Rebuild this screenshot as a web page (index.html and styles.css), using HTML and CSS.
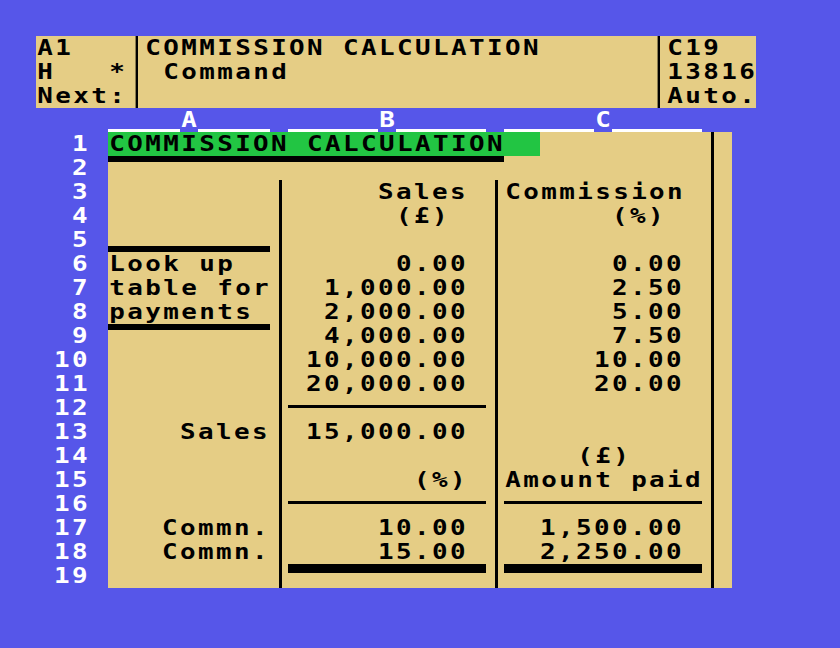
FILE: index.html
```html
<!DOCTYPE html>
<html lang="en">
<head>
<meta charset="utf-8">
<title>Commission Calculation</title>
<link rel="stylesheet" href="styles.css">
</head>
<body>
<div class="screen">
  <div class="status">
    <div class="st-left">
      <div class="ln">A1</div>
      <div class="ln">H   *</div>
      <div class="ln">Next:</div>
    </div>
    <div class="vsep"></div>
    <div class="st-mid">
      <div class="ln">COMMISSION CALCULATION</div>
      <div class="ln"> Command</div>
      <div class="ln"></div>
    </div>
    <div class="vsep"></div>
    <div class="st-right">
      <div class="ln">C19</div>
      <div class="ln">13816</div>
      <div class="ln">Auto.</div>
    </div>
  </div>

  <div class="colhead">
    <span class="ul"></span><span class="lt">A</span><span class="ul"></span><span></span>
    <span class="ul"></span><span class="lt">B</span><span class="ul"></span><span></span>
    <span class="ul"></span><span class="lt">C</span><span class="ul"></span><span></span>
  </div>

  <div class="sheet">
    <div class="rownums">
      <div class="rn">1</div><div class="rn">2</div><div class="rn">3</div><div class="rn">4</div>
      <div class="rn">5</div><div class="rn">6</div><div class="rn">7</div><div class="rn">8</div>
      <div class="rn">9</div><div class="rn">10</div><div class="rn">11</div><div class="rn">12</div>
      <div class="rn">13</div><div class="rn">14</div><div class="rn">15</div><div class="rn">16</div>
      <div class="rn">17</div><div class="rn">18</div><div class="rn">19</div>
    </div>
    <div class="cells">
      <!-- 1 -->
      <div class="row">
        <div class="title">COMMISSION CALCULATION</div><div class="s on"></div><div></div>
      </div>
      <!-- 2 -->
      <div class="row">
        <div class="span-ab bar-top"></div><div class="c"></div><div class="s on"></div><div></div>
      </div>
      <!-- 3 -->
      <div class="row">
        <div class="c"></div><div class="s on"></div>
        <div class="c num">Sales</div><div class="s on"></div>
        <div class="c">Commission</div><div class="s on"></div><div></div>
      </div>
      <!-- 4 -->
      <div class="row">
        <div class="c"></div><div class="s on"></div>
        <div class="c num">(£) </div><div class="s on"></div>
        <div class="c num">(%) </div><div class="s on"></div><div></div>
      </div>
      <!-- 5 -->
      <div class="row">
        <div class="c bar-bottom"></div><div class="s on"></div>
        <div class="c"></div><div class="s on"></div>
        <div class="c"></div><div class="s on"></div><div></div>
      </div>
      <!-- 6 -->
      <div class="row">
        <div class="c">Look up</div><div class="s on"></div>
        <div class="c num">0.00</div><div class="s on"></div>
        <div class="c num">0.00</div><div class="s on"></div><div></div>
      </div>
      <!-- 7 -->
      <div class="row">
        <div class="c">table for</div><div class="s on"></div>
        <div class="c num">1,000.00</div><div class="s on"></div>
        <div class="c num">2.50</div><div class="s on"></div><div></div>
      </div>
      <!-- 8 -->
      <div class="row">
        <div class="c">payments</div><div class="s on"></div>
        <div class="c num">2,000.00</div><div class="s on"></div>
        <div class="c num">5.00</div><div class="s on"></div><div></div>
      </div>
      <!-- 9 -->
      <div class="row">
        <div class="c bar-top"></div><div class="s on"></div>
        <div class="c num">4,000.00</div><div class="s on"></div>
        <div class="c num">7.50</div><div class="s on"></div><div></div>
      </div>
      <!-- 10 -->
      <div class="row">
        <div class="c"></div><div class="s on"></div>
        <div class="c num">10,000.00</div><div class="s on"></div>
        <div class="c num">10.00</div><div class="s on"></div><div></div>
      </div>
      <!-- 11 -->
      <div class="row">
        <div class="c"></div><div class="s on"></div>
        <div class="c num">20,000.00</div><div class="s on"></div>
        <div class="c num">20.00</div><div class="s on"></div><div></div>
      </div>
      <!-- 12 -->
      <div class="row">
        <div class="c"></div><div class="s on"></div>
        <div class="c rule"></div><div class="s on"></div>
        <div class="c"></div><div class="s on"></div><div></div>
      </div>
      <!-- 13 -->
      <div class="row">
        <div class="c label">Sales</div><div class="s on"></div>
        <div class="c num">15,000.00</div><div class="s on"></div>
        <div class="c"></div><div class="s on"></div><div></div>
      </div>
      <!-- 14 -->
      <div class="row">
        <div class="c"></div><div class="s on"></div>
        <div class="c"></div><div class="s on"></div>
        <div class="c">    (£)</div><div class="s on"></div><div></div>
      </div>
      <!-- 15 -->
      <div class="row">
        <div class="c"></div><div class="s on"></div>
        <div class="c num">(%)</div><div class="s on"></div>
        <div class="c">Amount paid</div><div class="s on"></div><div></div>
      </div>
      <!-- 16 -->
      <div class="row">
        <div class="c"></div><div class="s on"></div>
        <div class="c rule"></div><div class="s on"></div>
        <div class="c rule"></div><div class="s on"></div><div></div>
      </div>
      <!-- 17 -->
      <div class="row">
        <div class="c label">Commn.</div><div class="s on"></div>
        <div class="c num">10.00</div><div class="s on"></div>
        <div class="c num">1,500.00</div><div class="s on"></div><div></div>
      </div>
      <!-- 18 -->
      <div class="row">
        <div class="c label">Commn.</div><div class="s on"></div>
        <div class="c num">15.00</div><div class="s on"></div>
        <div class="c num">2,250.00</div><div class="s on"></div><div></div>
      </div>
      <!-- 19 -->
      <div class="row">
        <div class="c"></div><div class="s on"></div>
        <div class="c bar-thick"></div><div class="s on"></div>
        <div class="c bar-thick"></div><div class="s on"></div><div></div>
      </div>
    </div>
  </div>
</div>
</body>
</html>
```

FILE: styles.css
```css
html, body {
  margin: 0;
  padding: 0;
}

body {
  width: 840px;
  height: 648px;
  overflow: hidden;
  background: #5656e9;
}

/* The screen is laid out on a 15px character grid and stretched
   horizontally to the 18px cells of the original wide pixel font. */
.screen {
  width: 600px;
  margin: 36px 0 0 36px;
  transform: scaleX(1.2);
  transform-origin: 0 0;
  color: #000;
  font-family: "DejaVu Sans Mono", "Liberation Mono", monospace;
  font-weight: bold;
  font-size: 21.593px;
  line-height: 24px;
  letter-spacing: 2px;
}

.ln {
  height: 24px;
  white-space: pre;
  padding-left: 1px;
}

/* ---------- status panel ---------- */
.status {
  display: flex;
  width: 600px;
  height: 72px;
  background: #e5cd85;
}

.st-left {
  width: 82.5px;
}

.vsep {
  width: 2.5px;
  background: #000;
}

.st-mid {
  width: 427.5px;
  padding-left: 5px;
}

.st-right {
  width: 75px;
  padding-left: 5px;
}

/* ---------- column letters ---------- */
.colhead {
  display: grid;
  grid-template-columns: 60px 15px 60px 15px 75px 15px 75px 15px 75px 15px 75px 15px;
  height: 24px;
  margin-left: 60px;
  color: #fff;
}

.colhead .ul {
  border-bottom: 3px solid #fff;
}

.colhead .lt {
  padding-left: 1px;
}

/* ---------- sheet ---------- */
.sheet {
  display: flex;
}

.rownums {
  width: 60px;
  color: #fff;
}

.rn {
  height: 24px;
  text-align: right;
  padding-right: 15px;
}

.cells {
  width: 520px;
  background: #e5cd85;
}

.row {
  display: grid;
  grid-template-columns: 135px 15px 165px 15px 165px 15px 10px;
  height: 24px;
}

.c {
  white-space: pre;
  padding-left: 1px;
}

.c.num {
  text-align: right;
  padding-right: 15px;
}

.c.label {
  text-align: right;
}

.s.on {
  background: linear-gradient(to right, transparent 7.5px, #000 7.5px, #000 10px, transparent 10px);
}

.row:nth-child(-n+2) .s.on:not(:nth-last-child(2)) {
  background: none;
}

.title {
  grid-column: 1 / 6;
  justify-self: start;
  width: 359px;
  padding-left: 1px;
  background: #22c543;
  white-space: pre;
}

.span-ab {
  grid-column: 1 / 5;
}

.bar-top {
  background: linear-gradient(#000, #000) 0 0 / 100% 6px no-repeat;
}

.bar-bottom {
  background: linear-gradient(#000, #000) 0 18px / 100% 6px no-repeat;
}

.rule {
  background: linear-gradient(#000, #000) 0 9px / 100% 3px no-repeat;
}

.bar-thick {
  background: linear-gradient(#000, #000) 0 0 / 100% 9px no-repeat;
}
```
